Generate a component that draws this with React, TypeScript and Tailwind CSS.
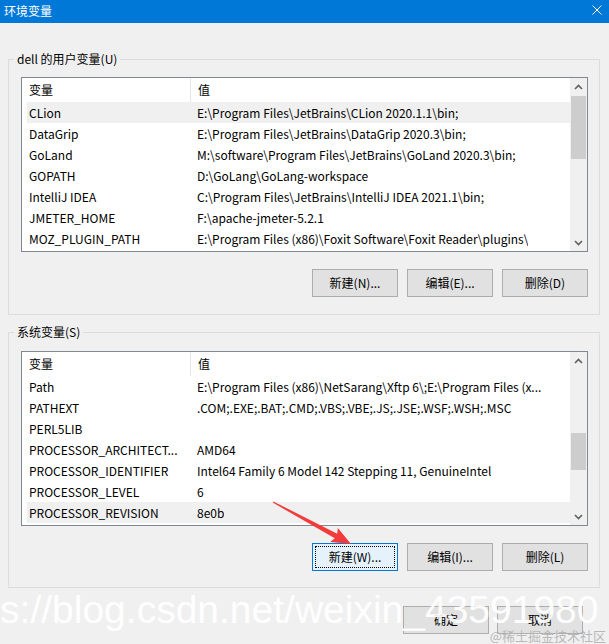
import React from 'react';

type Row = { name: string; value: string };

const userVars: Row[] = [
  { name: 'CLion', value: 'E:\\Program Files\\JetBrains\\CLion 2020.1.1\\bin;' },
  { name: 'DataGrip', value: 'E:\\Program Files\\JetBrains\\DataGrip 2020.3\\bin;' },
  { name: 'GoLand', value: 'M:\\software\\Program Files\\JetBrains\\GoLand 2020.3\\bin;' },
  { name: 'GOPATH', value: 'D:\\GoLang\\GoLang-workspace' },
  { name: 'IntelliJ IDEA', value: 'C:\\Program Files\\JetBrains\\IntelliJ IDEA 2021.1\\bin;' },
  { name: 'JMETER_HOME', value: 'F:\\apache-jmeter-5.2.1' },
  { name: 'MOZ_PLUGIN_PATH', value: 'E:\\Program Files (x86)\\Foxit Software\\Foxit Reader\\plugins\\' },
];

const systemVars: Row[] = [
  { name: 'Path', value: 'E:\\Program Files (x86)\\NetSarang\\Xftp 6\\;E:\\Program Files (x...' },
  { name: 'PATHEXT', value: '.COM;.EXE;.BAT;.CMD;.VBS;.VBE;.JS;.JSE;.WSF;.WSH;.MSC' },
  { name: 'PERL5LIB', value: '' },
  { name: 'PROCESSOR_ARCHITECT...', value: 'AMD64' },
  { name: 'PROCESSOR_IDENTIFIER', value: 'Intel64 Family 6 Model 142 Stepping 11, GenuineIntel' },
  { name: 'PROCESSOR_LEVEL', value: '6' },
  { name: 'PROCESSOR_REVISION', value: '8e0b' },
];

function Chevron({ up }: { up?: boolean }) {
  return (
    <svg width="9" height="6" viewBox="0 0 9 6" className="block">
      <path
        d={up ? 'M1 5 L4.5 1.5 L8 5' : 'M1 1 L4.5 4.5 L8 1'}
        fill="none"
        stroke="#606060"
        strokeWidth="1.6"
      />
    </svg>
  );
}

function VarList({ rows, selected, thumbTop, thumbHeight }: { rows: Row[]; selected: number; thumbTop: number; thumbHeight: number }) {
  return (
    <div className="flex h-[175px] w-[567px] border border-[#828790] bg-white">
      <div className="flex min-w-0 flex-1 flex-col overflow-hidden">
        <div className="flex h-[24px] shrink-0 items-center">
          <div className="flex h-full w-[169px] items-center border-r border-[#e5e5e5] pl-[7px]">变量</div>
          <div className="pl-[7px]">值</div>
        </div>
        {rows.map((r, i) => (
          <div
            key={r.name}
            className={`ml-[5px] flex h-[21px] shrink-0 items-center whitespace-nowrap ${i === selected ? 'bg-[#f0f0f0]' : ''}`}
          >
            <div className="w-[168px] shrink-0 pl-[2px]">{r.name}</div>
            <div className="overflow-hidden pl-[2px]">{r.value}</div>
          </div>
        ))}
      </div>
      <div className="flex w-[17px] shrink-0 flex-col bg-[#f0f0f0]">
        <div className="flex h-[17px] items-center justify-center">
          <Chevron up />
        </div>
        <div className="flex-1">
          <div className="mx-[1px] bg-[#cdcdcd]" style={{ marginTop: thumbTop, height: thumbHeight }} />
        </div>
        <div className="flex h-[17px] items-center justify-center">
          <Chevron />
        </div>
      </div>
    </div>
  );
}

function Btn({ label, focused }: { label: string; focused?: boolean }) {
  return (
    <button
      className={`flex h-[28px] w-[86px] items-center justify-center border text-[12px] ${
        focused
          ? 'border-[#0078d7] bg-[#e5f1fb] outline-1 outline-offset-[-4px] outline-dotted outline-black'
          : 'border-[#adadad] bg-[#e1e1e1]'
      }`}
    >
      {label}
    </button>
  );
}

export default function App() {
  return (
    <div
      className="relative h-[644px] w-[609px] overflow-hidden bg-[#f0f0f0] text-[12px] leading-[16px] text-black"
      style={{ fontFamily: '"Noto Sans CJK SC", "Noto Sans", sans-serif' }}
    >
      <div className="flex h-[23px] items-center justify-between bg-[#0078d7] pl-[4px] pr-[7px] text-white">
        <span className="-mt-[2px]">环境变量</span>
        <svg width="10" height="10" viewBox="0 0 10 10" className="-mt-[3px]">
          <path d="M0.5 0.5 L9.5 9.5 M9.5 0.5 L0.5 9.5" stroke="#fff" strokeWidth="1" />
        </svg>
      </div>

      <fieldset className="ml-[8px] mt-[28px] w-[592px] border border-[#dcdcdc] pb-[17px] pl-[12px] pr-[11px] pt-[10px]">
        <legend className="-ml-[7px] px-[3px] leading-[16px]">dell 的用户变量(U)</legend>
        <VarList rows={userVars} selected={0} thumbTop={1} thumbHeight={63} />
        <div className="mt-[17px] flex justify-end gap-[9px]">
          <Btn label="新建(N)..." />
          <Btn label="编辑(E)..." />
          <Btn label="删除(D)" />
        </div>
      </fieldset>

      <fieldset className="ml-[8px] mt-[9px] w-[592px] border border-[#dcdcdc] pb-[16px] pl-[12px] pr-[11px] pt-[11px]">
        <legend className="-ml-[7px] px-[3px] leading-[16px]">系统变量(S)</legend>
        <VarList rows={systemVars} selected={6} thumbTop={64} thumbHeight={37} />
        <div className="mt-[17px] flex justify-end gap-[9px]">
          <Btn label="新建(W)..." focused />
          <Btn label="编辑(I)..." />
          <Btn label="删除(L)" />
        </div>
      </fieldset>

      <div className="mt-[18px] flex justify-end gap-[8px] pr-[26px]">
        <Btn label="确定" />
        <Btn label="取消" />
      </div>

      {/* red annotation arrow */}
      <svg className="pointer-events-none absolute left-0 top-0" width="609" height="644">
        <polygon
          points="273.3,501.4 337.2,533.8 337.8,527.9 351,544 330.2,542.1 334.8,538.2 272.7,502.6"
          fill="#f23b3b"
        />
      </svg>

      {/* watermarks */}
      <div
        className="pointer-events-none absolute left-[-65px] top-[590px] whitespace-nowrap text-[39px] leading-[39px] text-white/90"
        style={{ fontFamily: '"Liberation Sans", Arial, sans-serif' }}
      >
        https://blog.csdn.net/weixin_43591980
      </div>
      <div className="pointer-events-none absolute bottom-[1px] right-[3px] whitespace-nowrap text-[13px] leading-[14px] text-[#b8b8b8]">
        @稀土掘金技术社区
      </div>
    </div>
  );
}
